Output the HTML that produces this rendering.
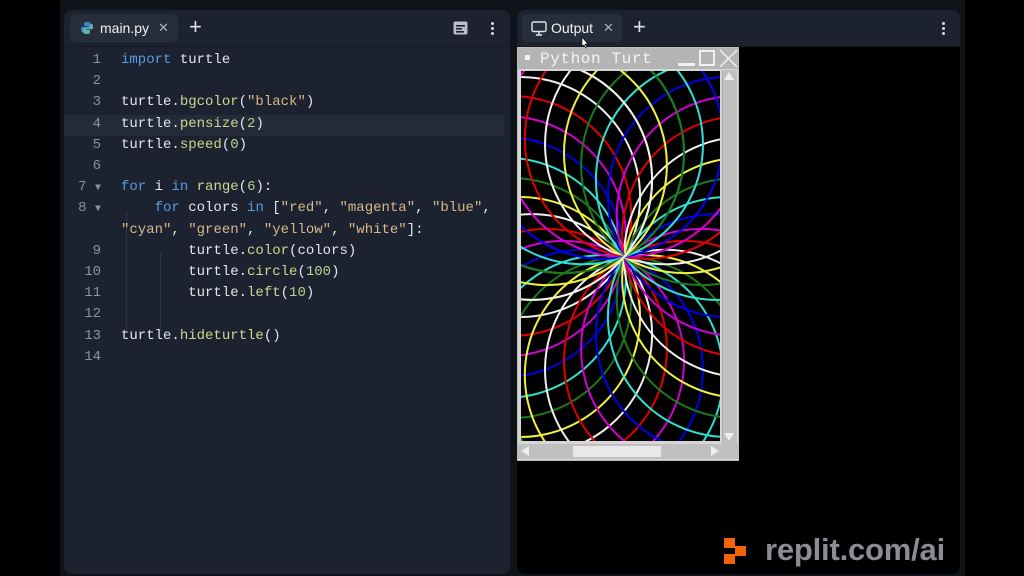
<!DOCTYPE html>
<html><head><meta charset="utf-8"><style>
*{margin:0;padding:0;box-sizing:border-box}
body{width:1024px;height:576px;background:#000;position:relative;overflow:hidden;font-family:"Liberation Sans",sans-serif}
.frame{position:absolute;left:60px;top:0;width:905px;height:576px;background:#0f131a}
.panel{position:absolute;top:10px;height:564px;background:#1c2230;border-radius:8px;overflow:hidden}
.tabbar{position:absolute;left:0;top:0;right:0;height:37px;border-bottom:1px solid #151a24}
.tab{position:absolute;top:4px;height:28px;background:#262d3b;border-radius:6px;color:#f0f2f5;font-size:14px;line-height:28px}
.code{position:absolute;left:-3px;top:42px;font-family:"Liberation Mono",monospace;font-size:14px}
.ln{position:absolute;width:40px;text-align:right;left:0;color:#8a93a3}
.cl{position:absolute;left:60px;color:#e3e6eb;white-space:pre}
.k{color:#5a9be0}.f{color:#cfd68e}.s{color:#d9b88a}.n{color:#b8d38d}
.dots{position:absolute;top:12px;width:3px}
.dots i{display:block;width:3px;height:3px;background:#d8dbe0;border-radius:50%;margin-bottom:2px}
</style></head><body>
<div class="frame"></div>
<div class="panel" style="left:64px;width:446px">
 <div class="tabbar">
  <div class="tab" style="left:6px;width:108px">
   <svg style="position:absolute;left:10px;top:7px" width="14" height="14" viewBox="0 0 14 14"><path d="M7 1C4 1 4 2 4 3v2h3.5v.7H2.5C1 5.7 1 7 1 8.5S1.5 11 2.5 11H4V9c0-1 1-2 2-2h3.5c1 0 1.5-.8 1.5-1.5V3c0-1-1-2-4-2z" fill="#3b82c6"/><path d="M7 13c3 0 3-1 3-2V9H6.5v-.7h5C13 8.3 13 7 13 5.5S12.5 3 11.5 3H10v2c0 1-1 2-2 2H4.5C3.5 7 3 7.8 3 8.5V11c0 1 1 2 4 2z" fill="#5fb3a8"/></svg>
   <span style="position:absolute;left:30px">main.py</span>
   <span style="position:absolute;left:88px;color:#aab0bb;font-size:13px">✕</span>
  </div>
  <span style="position:absolute;left:125px;top:3px;color:#e0e3e8;font-size:22px;line-height:28px">+</span>
  <svg style="position:absolute;left:389px;top:11px" width="15" height="14" viewBox="0 0 15 14"><rect x="0.5" y="0.5" width="14" height="13" rx="2" fill="#b9bec7"/><rect x="3" y="4" width="9" height="1.6" fill="#1c2230"/><rect x="3" y="7" width="6" height="1.6" fill="#1c2230"/><rect x="3" y="10" width="8" height="1.6" fill="#1c2230"/></svg>
  <div class="dots" style="left:427px"><i></i><i></i><i></i></div>
 </div>
 <div style="position:absolute;left:0;top:105px;width:440px;height:21px;background:#232a38"></div>
 <div style="position:absolute;left:62px;top:201px;width:1px;height:120px;background:#2d3443"></div>
 <div style="position:absolute;left:96px;top:243px;width:1px;height:78px;background:#2d3443"></div>
 <div class="code">
  <div class="ln" style="top:0px">1</div><div class="cl" style="top:0px"><span class="k">import</span> turtle</div>
  <div class="ln" style="top:21.2px">2</div>
  <div class="ln" style="top:42.4px">3</div><div class="cl" style="top:42.4px">turtle.<span class="f">bgcolor</span>(<span class="s">"black"</span>)</div>
  <div class="ln" style="top:63.6px">4</div><div class="cl" style="top:63.6px">turtle.<span class="f">pensize</span>(<span class="n">2</span>)</div>
  <div class="ln" style="top:84.8px">5</div><div class="cl" style="top:84.8px">turtle.<span class="f">speed</span>(<span class="n">0</span>)</div>
  <div class="ln" style="top:106px">6</div>
  <div class="ln" style="top:127.2px">7 <span style="font-size:10px">▼</span></div><div class="cl" style="top:127.2px"><span class="k">for</span> i <span class="k">in</span> <span class="f">range</span>(<span class="n">6</span>):</div>
  <div class="ln" style="top:148.4px">8 <span style="font-size:10px">▼</span></div><div class="cl" style="top:148.4px">    <span class="k">for</span> colors <span class="k">in</span> [<span class="s">"red"</span>, <span class="s">"magenta"</span>, <span class="s">"blue"</span>,</div>
  <div class="cl" style="top:169.6px"><span class="s">"cyan"</span>, <span class="s">"green"</span>, <span class="s">"yellow"</span>, <span class="s">"white"</span>]:</div>
  <div class="ln" style="top:190.8px">9</div><div class="cl" style="top:190.8px">        turtle.<span class="f">color</span>(colors)</div>
  <div class="ln" style="top:212px">10</div><div class="cl" style="top:212px">        turtle.<span class="f">circle</span>(<span class="n">100</span>)</div>
  <div class="ln" style="top:233.2px">11</div><div class="cl" style="top:233.2px">        turtle.<span class="f">left</span>(<span class="n">10</span>)</div>
  <div class="ln" style="top:254.4px">12</div>
  <div class="ln" style="top:275.6px">13</div><div class="cl" style="top:275.6px">turtle.<span class="f">hideturtle</span>()</div>
  <div class="ln" style="top:296.8px">14</div>
 </div>
</div>
<div class="panel" style="left:517px;width:443px">
 <div class="tabbar">
  <div class="tab" style="left:5px;width:100px">
   <svg style="position:absolute;left:9px;top:7px" width="16" height="15" viewBox="0 0 16 15"><rect x="1" y="1" width="14" height="9.5" rx="1.5" fill="none" stroke="#e0e3e8" stroke-width="1.4"/><path d="M5 14h6M8 10.5V14" stroke="#e0e3e8" stroke-width="1.4"/></svg>
   <span style="position:absolute;left:29px">Output</span>
   <span style="position:absolute;left:81px;color:#aab0bb;font-size:13px">✕</span>
  </div>
  <span style="position:absolute;left:116px;top:3px;color:#e0e3e8;font-size:22px;line-height:28px">+</span>
  <div class="dots" style="left:425px"><i></i><i></i><i></i></div>
 </div>
 <div style="position:absolute;left:0;top:37px;width:443px;height:527px;background:#000"></div>
</div>
<div style="position:absolute;left:517px;top:47px;width:222px;height:414px;background:#d6d6d6;border:1px solid #bdbdbd">
 <div style="position:absolute;left:0;top:0;width:220px;height:21px;background:#b4b4b4"></div>
 <div style="position:absolute;left:7px;top:7px;width:5px;height:5px;background:#f4f4f4"></div>
 <div style="position:absolute;left:22px;top:1px;color:#f4f4f4;font-family:'Liberation Mono',monospace;font-size:16px;line-height:20px;letter-spacing:0.6px">Python Turt</div>
 <div style="position:absolute;left:160px;top:15px;width:17px;height:3px;background:#f0f0f0"></div>
 <div style="position:absolute;left:181px;top:2px;width:16px;height:16px;border:2px solid #f0f0f0"></div>
 <svg style="position:absolute;left:201px;top:1px" width="19" height="19"><path d="M1 1L18 18M18 1L1 18" stroke="#f0f0f0" stroke-width="1.5"/></svg>
 <div style="position:absolute;left:204px;top:22px;width:15px;height:374px;background:#c0c0c0;border-left:1px solid #aaa"></div>
 <div style="position:absolute;left:206px;top:24px;width:0;height:0;border-left:5px solid transparent;border-right:5px solid transparent;border-bottom:8px solid #eee"></div>
 <div style="position:absolute;left:206px;top:385px;width:0;height:0;border-left:5px solid transparent;border-right:5px solid transparent;border-top:8px solid #eee"></div>
 <div style="position:absolute;left:0;top:396px;width:220px;height:15px;background:#c0c0c0"></div>
 <div style="position:absolute;left:55px;top:398px;width:88px;height:11px;background:#e8e8e8"></div>
 <div style="position:absolute;left:3px;top:398px;width:0;height:0;border-top:5px solid transparent;border-bottom:5px solid transparent;border-right:8px solid #eee"></div>
 <div style="position:absolute;left:193px;top:398px;width:0;height:0;border-top:5px solid transparent;border-bottom:5px solid transparent;border-left:8px solid #eee"></div>
</div>
<svg style="position:absolute;left:0;top:0" width="1024" height="576">
<defs><clipPath id="c"><rect x="521" y="71" width="199" height="370"/></clipPath></defs>
<rect x="521" y="71" width="199" height="370" fill="#000"/>
<g clip-path="url(#c)" fill="none" stroke-width="2">
<circle cx="624" cy="137" r="120" stroke="#e00000" transform="rotate(0 624 257)"/>
<circle cx="624" cy="137" r="120" stroke="#d000d0" transform="rotate(-10 624 257)"/>
<circle cx="624" cy="137" r="120" stroke="#0000e0" transform="rotate(-20 624 257)"/>
<circle cx="624" cy="137" r="120" stroke="#30e0d0" transform="rotate(-30 624 257)"/>
<circle cx="624" cy="137" r="120" stroke="#1a7a1a" transform="rotate(-40 624 257)"/>
<circle cx="624" cy="137" r="120" stroke="#f0f040" transform="rotate(-50 624 257)"/>
<circle cx="624" cy="137" r="120" stroke="#f0f0f0" transform="rotate(-60 624 257)"/>
<circle cx="624" cy="137" r="120" stroke="#e00000" transform="rotate(-70 624 257)"/>
<circle cx="624" cy="137" r="120" stroke="#d000d0" transform="rotate(-80 624 257)"/>
<circle cx="624" cy="137" r="120" stroke="#0000e0" transform="rotate(-90 624 257)"/>
<circle cx="624" cy="137" r="120" stroke="#30e0d0" transform="rotate(-100 624 257)"/>
<circle cx="624" cy="137" r="120" stroke="#1a7a1a" transform="rotate(-110 624 257)"/>
<circle cx="624" cy="137" r="120" stroke="#f0f040" transform="rotate(-120 624 257)"/>
<circle cx="624" cy="137" r="120" stroke="#f0f0f0" transform="rotate(-130 624 257)"/>
<circle cx="624" cy="137" r="120" stroke="#e00000" transform="rotate(-140 624 257)"/>
<circle cx="624" cy="137" r="120" stroke="#d000d0" transform="rotate(-150 624 257)"/>
<circle cx="624" cy="137" r="120" stroke="#0000e0" transform="rotate(-160 624 257)"/>
<circle cx="624" cy="137" r="120" stroke="#30e0d0" transform="rotate(-170 624 257)"/>
<circle cx="624" cy="137" r="120" stroke="#1a7a1a" transform="rotate(-180 624 257)"/>
<circle cx="624" cy="137" r="120" stroke="#f0f040" transform="rotate(-190 624 257)"/>
<circle cx="624" cy="137" r="120" stroke="#f0f0f0" transform="rotate(-200 624 257)"/>
<circle cx="624" cy="137" r="120" stroke="#e00000" transform="rotate(-210 624 257)"/>
<circle cx="624" cy="137" r="120" stroke="#d000d0" transform="rotate(-220 624 257)"/>
<circle cx="624" cy="137" r="120" stroke="#0000e0" transform="rotate(-230 624 257)"/>
<circle cx="624" cy="137" r="120" stroke="#30e0d0" transform="rotate(-240 624 257)"/>
<circle cx="624" cy="137" r="120" stroke="#1a7a1a" transform="rotate(-250 624 257)"/>
<circle cx="624" cy="137" r="120" stroke="#f0f040" transform="rotate(-260 624 257)"/>
<circle cx="624" cy="137" r="120" stroke="#f0f0f0" transform="rotate(-270 624 257)"/>
<circle cx="624" cy="137" r="120" stroke="#e00000" transform="rotate(-280 624 257)"/>
<circle cx="624" cy="137" r="120" stroke="#d000d0" transform="rotate(-290 624 257)"/>
<circle cx="624" cy="137" r="120" stroke="#0000e0" transform="rotate(-300 624 257)"/>
<circle cx="624" cy="137" r="120" stroke="#30e0d0" transform="rotate(-310 624 257)"/>
<circle cx="624" cy="137" r="120" stroke="#1a7a1a" transform="rotate(-320 624 257)"/>
<circle cx="624" cy="137" r="120" stroke="#f0f040" transform="rotate(-330 624 257)"/>
<circle cx="624" cy="137" r="120" stroke="#f0f0f0" transform="rotate(-340 624 257)"/>
<circle cx="624" cy="137" r="120" stroke="#e00000" transform="rotate(-350 624 257)"/>
<circle cx="624" cy="137" r="120" stroke="#d000d0" transform="rotate(0 624 257)"/>
<circle cx="624" cy="137" r="120" stroke="#0000e0" transform="rotate(-10 624 257)"/>
<circle cx="624" cy="137" r="120" stroke="#30e0d0" transform="rotate(-20 624 257)"/>
<circle cx="624" cy="137" r="120" stroke="#1a7a1a" transform="rotate(-30 624 257)"/>
<circle cx="624" cy="137" r="120" stroke="#f0f040" transform="rotate(-40 624 257)"/>
<circle cx="624" cy="137" r="120" stroke="#f0f0f0" transform="rotate(-50 624 257)"/>
</g>
<path d="M582 37v9l2-1 2 3 1-1-2-3h3z" fill="#fff" stroke="#000" stroke-width="0.6"/>
<rect x="724" y="538" width="11" height="10" fill="#f26207"/>
<rect x="735" y="546" width="11" height="10" fill="#f26207"/>
<rect x="724" y="554" width="11" height="10" fill="#f26207"/>
</svg>
<div style="position:absolute;left:765px;top:530px;color:#8a8d93;font-size:31px;font-weight:bold;line-height:40px;letter-spacing:-0.2px">replit.com/ai</div>
</body></html>
